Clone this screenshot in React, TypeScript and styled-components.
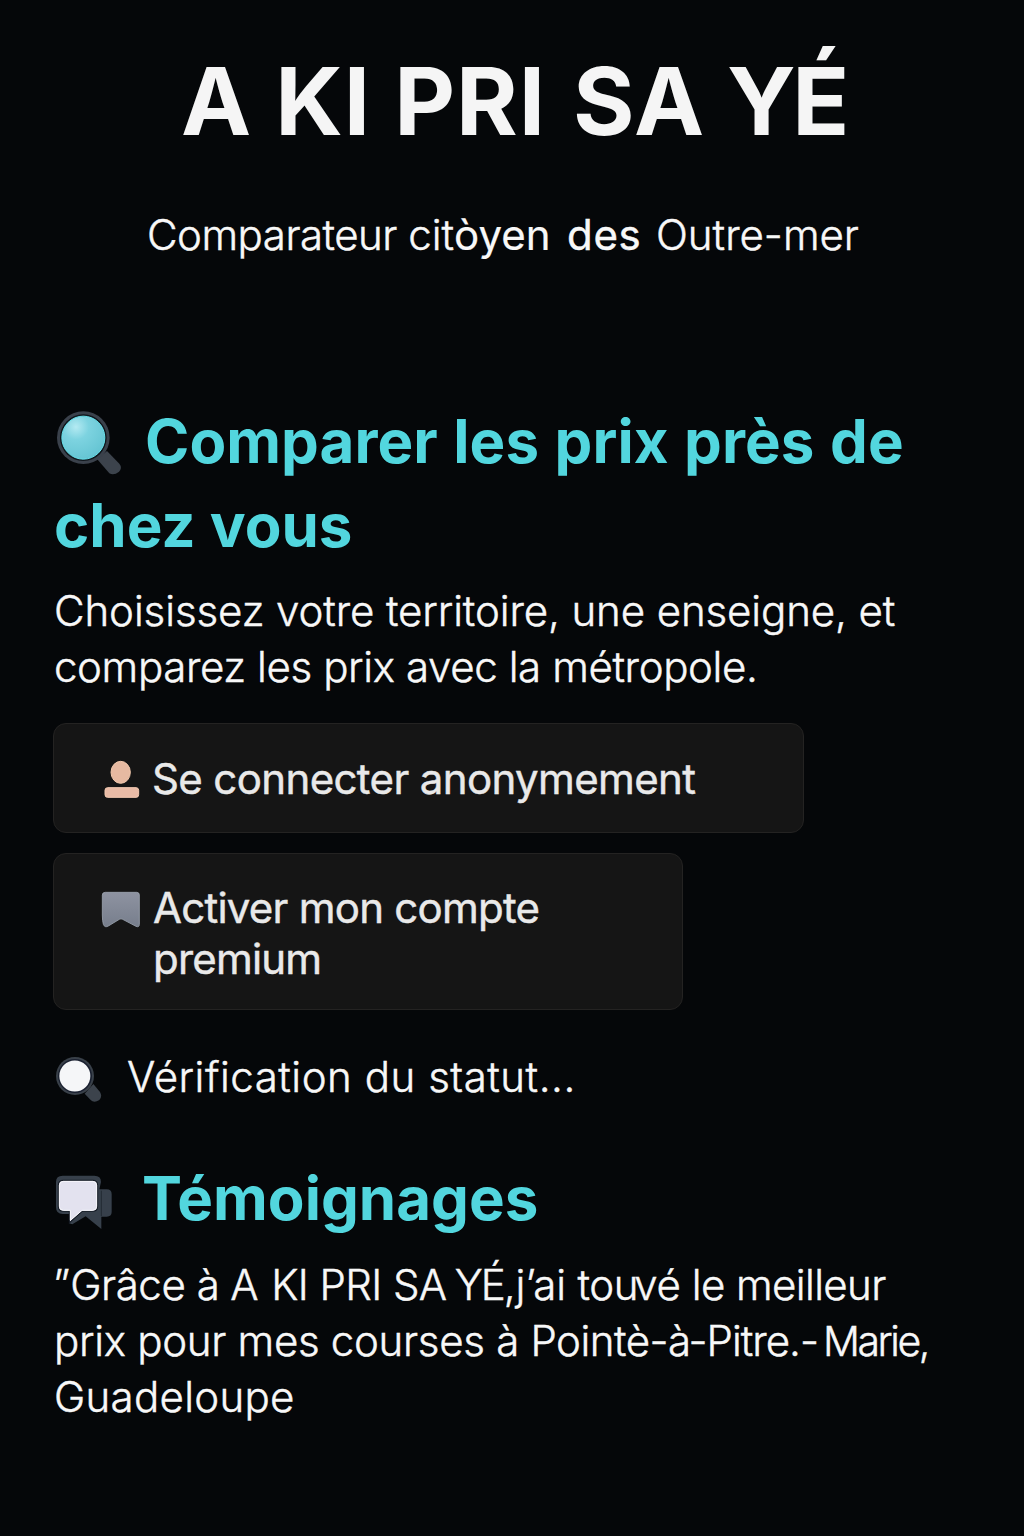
import React from 'react';
import styled, { createGlobalStyle } from 'styled-components';

const Global = createGlobalStyle`
  * { box-sizing: border-box; }
  body { margin: 0; background: #050709; }
`;

const Page = styled.main`
  width: 1024px;
  height: 1536px;
  overflow: hidden;
  background: #050709;
  color: #f8f8f8;
  font-family: Inter, "Noto Sans", sans-serif;
  font-size: 42px;
  font-weight: 300;
  line-height: 56px;
  padding: 45px 54px 0;
  -webkit-text-stroke: 0.45px currentColor;
`;

const Header = styled.header`
  display: flex;
  flex-direction: column;
`;

const Title = styled.h1`
  margin: 0;
  padding-left: 127px;
  font-size: 94px;
  font-weight: 700;
  line-height: 112px;
  color: #f5f5f5;
  white-space: nowrap;
  -webkit-text-stroke: 0;
`;

const Subtitle = styled.p`
  margin: 50px 0 0;
  padding-left: 93px;
  white-space: nowrap;
`;

const Run = styled.span<{ $ls?: number; $gap?: number; $w?: number; $ws?: number }>`
  letter-spacing: ${p => p.$ls ?? 0}px;
  word-spacing: ${p => p.$ws ?? 0}px;
  margin-left: ${p => p.$gap ?? 0}px;
  font-weight: ${p => p.$w ?? 'inherit'};
`;

const Strong = styled(Run)`
  font-weight: 400;
  -webkit-text-stroke: 0.2px currentColor;
`;

const Author = styled(Run)`
  font-size: 41px;
`;

const Section = styled.section<{ $top: number }>`
  display: flex;
  flex-direction: column;
  align-items: flex-start;
  margin-top: ${p => p.$top}px;
`;

const Heading = styled.h2`
  margin: 0;
  font-size: 60px;
  font-weight: 700;
  line-height: 84px;
  color: #52d6de;
  -webkit-text-stroke: 0;
`;

const Row = styled.span<{ $gap: number }>`
  display: flex;
  align-items: flex-start;
  gap: ${p => p.$gap}px;
  white-space: nowrap;
`;

const Icon = styled.svg<{ $top: number; $left?: number }>`
  display: block;
  flex: none;
  margin-top: ${p => p.$top}px;
  margin-left: ${p => p.$left ?? 0}px;
`;

const Copy = styled.p<{ $top: number }>`
  margin: ${p => p.$top}px 0 0;
`;

const TextLine = styled.span<{ $ls?: number }>`
  display: block;
  white-space: nowrap;
  letter-spacing: ${p => p.$ls ?? 0}px;
`;

const Action = styled.button<{ $width: number; $height: number; $top: number; $pad: number }>`
  display: flex;
  align-items: flex-start;
  width: ${p => p.$width}px;
  height: ${p => p.$height}px;
  margin: ${p => p.$top}px 0 0 -1px;
  padding: ${p => p.$pad}px 47px 0;
  gap: 11px;
  border: 1px solid #242322;
  border-radius: 13px;
  background: #151515;
  color: #e9e9e9;
  font: inherit;
  font-weight: 400;
  line-height: 51px;
  text-align: left;
  -webkit-text-stroke: 0.45px currentColor;
`;

const Status = styled.p`
  display: flex;
  margin: 39px 0 0;
  gap: 25px;
  white-space: nowrap;
`;

const SearchIcon = () => (
  <Icon $top={11} $left={1} width="68" height="66" viewBox="45 45 204 198">
    <defs>
      <radialGradient id="lens" cx="0.33" cy="0.25" r="0.85">
        <stop offset="0" stopColor="#b4eaf2" />
        <stop offset="0.35" stopColor="#7dd3e0" />
        <stop offset="1" stopColor="#62c3d1" />
      </radialGradient>
    </defs>
    <path d="M171 192 L201 168 L238 206 Q248 218 237 230 Q222 242 208 235 Z" fill="#3c434c" />
    <circle cx="130" cy="128" r="79" fill="#3a414b" />
    <circle cx="130" cy="128" r="70" fill="#10161c" />
    <circle cx="130" cy="128" r="64.5" fill="url(#lens)" stroke="#66e0ea" strokeWidth="3" />
  </Icon>
);

const UserIcon = () => (
  <Icon $top={7} $left={1} width="40" height="40" viewBox="187 150 120 120">
    <ellipse cx="243" cy="187" rx="29" ry="33" fill="#e6b9a1" stroke="#f3c9ad" strokeWidth="3" />
    <rect x="196" y="233" width="101" height="29" rx="8" fill="#e9bba6" stroke="#f5cbb2" strokeWidth="3" />
  </Icon>
);

const BookmarkIcon = () => (
  <Icon $top={8} width="40" height="40" viewBox="183 135 120 120">
    <defs>
      <linearGradient id="mark" x1="0" y1="0" x2="0" y2="1">
        <stop offset="0" stopColor="#8e93a1" />
        <stop offset="1" stopColor="#777e8c" />
      </linearGradient>
    </defs>
    <path
      d="M196 142 H290 Q298 142 298 150 V238 Q298 248 288 244 L248 223 Q243 220 238 223 L205 243 Q194 249 190 238 Q187 228 187 210 V150 Q187 142 196 142 Z"
      fill="url(#mark)" stroke="#9ba3b0" strokeWidth="2.5"
    />
  </Icon>
);

const LensIcon = () => (
  <Icon $top={7} $left={1} width="47" height="47" viewBox="45 48 141 141">
    <path d="M134 161 L160 132 L180 156 Q188 169 178 180 Q162 190 152 180 Z" fill="#3c434c" />
    <circle cx="105" cy="108" r="57" fill="#394049" />
    <circle cx="105" cy="108" r="51" fill="#1a2030" />
    <circle cx="104.500" cy="108" r="46.500" fill="#f5f6f8" />
  </Icon>
);

const ChatIcon = () => (
  <Icon $top={18} $left={1} width="59" height="56" viewBox="45 42 177 168">
    <path d="M178 88 H200 Q215 88 215 103 V156 Q215 170 200 170 H184 V207 L137 169 L97 193 L87 190 V162 H68 Q48 162 48 142 V66 Q48 47 68 47 H163 Q183 47 183 66 Z" fill="#37404b" />
    <path d="M184 92 V168" stroke="#222933" strokeWidth="3" />
    <path d="M70 63 H158 Q171 63 171 76 V139 Q171 152 158 152 H126 L90 184 V152 H70 Q57 152 57 139 V76 Q57 63 70 63 Z" fill="#e3e2ef" stroke="#161c26" strokeWidth="7" paintOrder="stroke" />
    <path d="M70 64 H158 Q170 64 170 76 V139 Q170 151 158 151 H126 L91 181 V151 H70 Q58 151 58 139 V76 Q58 64 70 64 Z" fill="none" stroke="#f7f7fb" strokeWidth="3" />
  </Icon>
);

export default function App() {
  return (
    <>
      <Global />
      <Page>
        <Header>
          <Title>
            <Run $ls={0.9}>A KI PRI </Run>
            <Run $gap={4} $ls={0.8}>SA </Run>
            <Run $gap={-1} $ls={-3.5}>YÉ</Run>
          </Title>
          <Subtitle>
            <Run $ls={-0.5}>Comparateur </Run>
            <Run>cit</Run><Strong>òyen</Strong>
            <Run $w={400} $gap={4} $ls={0.7}> des </Run>
            <Run $gap={2}>Outre-mer</Run>
          </Subtitle>
        </Header>

        <Section $top={136}>
          <Heading>
            <Row $gap={22}><SearchIcon /><Run $ls={0.05} $ws={1.3}>Comparer les prix près de</Run></Row>
            <TextLine>chez vous</TextLine>
          </Heading>
          <Copy $top={16}>
            <TextLine $ls={-0.1}>Choisissez votre territoire, une enseigne, et</TextLine>
            <TextLine $ls={-0.38}>comparez les prix avec la métropole.</TextLine>
          </Copy>
          <Action $width={751} $height={110} $top={28} $pad={29}>
            <UserIcon />
            <TextLine><Run $gap={-1} $ls={-0.63}>Se connecter anonymement</Run></TextLine>
          </Action>
          <Action $width={630} $height={157} $top={20} $pad={28}>
            <BookmarkIcon />
            <span>
              <TextLine><Run $gap={1} $ls={-0.76}>Activer mon compte</Run></TextLine>
              <TextLine><Run $gap={1} $ls={-0.8}>premium</Run></TextLine>
            </span>
          </Action>
          <Status><LensIcon /><Run $ls={0.53}>Vérification du statut...</Run></Status>
        </Section>

        <Section $top={51}>
          <Heading>
            <Row $gap={28}><ChatIcon /><Run>Témoignages</Run></Row>
          </Heading>
          <Copy $top={17}>
            <TextLine>
              <Run $gap={-1}>”</Run>
              <Run $ls={-0.4}>Grâce à </Run>
              <Run $gap={-0.5} $ls={-0.6}>A </Run>
              <Run $gap={2} $ls={-0.6}>KI PRI SA </Run>
              <Run $gap={-3} $ls={-2}>YÉ,</Run>
              <Run $gap={2}>j’ai </Run>
              <Run $gap={-0.5} $ls={-0.3}>tou</Run>
              <Run $gap={-4} $ls={-0.4}>vé </Run>
              <Run $gap={0} $ls={-0.6}>le meilleur</Run>
            </TextLine>
            <TextLine>
              <Run $ls={-0.3}>prix pour mes courses à </Run>
              <Run $ls={-0.5}>Pointè-à</Run>
              <Run $gap={-2} $ls={-1}>-Pitre.</Run>
              <Run $gap={0}>-</Run>
              <Author $gap={4} $ls={-2.4}>Marie,</Author>
            </TextLine>
            <TextLine $ls={0.3}>Guadeloupe</TextLine>
          </Copy>
        </Section>
      </Page>
    </>
  );
}
